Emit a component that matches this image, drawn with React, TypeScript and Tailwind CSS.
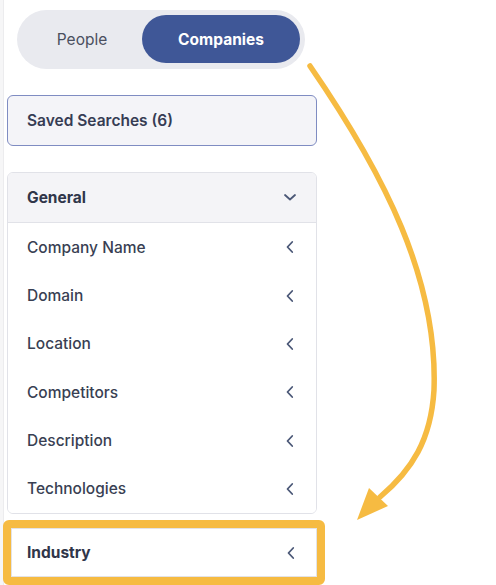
import React from "react";

const font = { fontFamily: "Inter, 'Noto Sans', sans-serif" };

function ChevronLeft() {
  return (
    <svg width="16" height="16" viewBox="0 0 16 16" fill="none">
      <path d="M10.2 3 L5.5 8 L10.2 13" stroke="#4b5877" strokeWidth="1.8" strokeLinecap="round" strokeLinejoin="round" />
    </svg>
  );
}

function ChevronDown() {
  return (
    <svg width="16" height="16" viewBox="0 0 16 16" fill="none">
      <path d="M3 6 L8 10.5 L13 6" stroke="#4b5877" strokeWidth="1.8" strokeLinecap="round" strokeLinejoin="round" />
    </svg>
  );
}

const items = ["Company Name", "Domain", "Location", "Competitors", "Description", "Technologies"];

export default function App() {
  return (
    <div className="relative w-[496px] h-[585px] overflow-hidden bg-white flex" style={font}>
      <div className="w-[4px] h-full bg-[#f6f6f7] border-r border-[#ececee]" />
      <div className="flex flex-col pl-[3px] pt-[10px]">
        <div className="ml-[10px] w-[288px] h-[59px] rounded-full bg-[#e9eaef] flex items-center p-[5px]">
          <div className="flex-1 h-[48px] flex items-center justify-center text-[15.5px] text-[#4a4f5e]">People</div>
          <div className="w-[158px] h-[48px] rounded-full bg-[#3f5797] flex items-center justify-center text-[15.5px] font-bold text-white">
            Companies
          </div>
        </div>

        <div className="mt-[26px] w-[310px] h-[51px] rounded-md border border-[#7f8cc2] bg-[#f4f4f8] flex items-center px-[19px] text-[15.5px] font-semibold text-[#363c54]">
          Saved Searches (6)
        </div>

        <div className="mt-[26px] w-[310px] rounded-md border border-[#e1e2e8] overflow-hidden">
          <div className="h-[50px] bg-[#f4f4f7] border-b border-[#e1e2e8] flex items-center justify-between pl-[19px] pr-[18px]">
            <span className="text-[15.5px] font-bold text-[#30364a]">General</span>
            <ChevronDown />
          </div>
          {items.map((t) => (
            <div key={t} className="h-[48.4px] flex items-center justify-between pl-[19px] pr-[18px] bg-white">
              <span className="text-[15.5px] font-medium text-[#393f53]">{t}</span>
              <ChevronLeft />
            </div>
          ))}
        </div>

        <div className="mt-[6px] -ml-[4px] w-[322px] h-[65px] rounded-md border-[8px] border-[#f6bb42]">
          <div className="h-full bg-white border border-[#e3e3e6] flex items-center justify-between pl-[15px] pr-[17px]">
            <span className="text-[15.5px] font-bold text-[#30364a]">Industry</span>
            <ChevronLeft />
          </div>
        </div>
      </div>

      <svg className="absolute left-0 top-0 pointer-events-none" width="496" height="585" viewBox="0 0 496 585">
        <path
          d="M310 66 C385 175 438 280 434 390 C431 440 412 470 380 497"
          fill="none"
          stroke="#f6bb42"
          strokeWidth="5.5"
          strokeLinecap="round"
        />
        <polygon points="357,520 369,488 388,506" fill="#f6bb42" />
      </svg>
    </div>
  );
}
